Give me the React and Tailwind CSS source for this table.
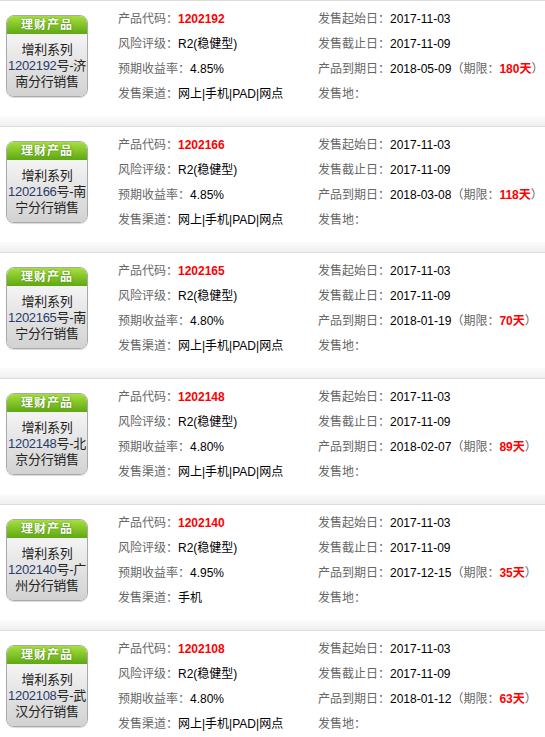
import React from "react";

const products = [
  { code: "1202192", city: "济南", rate: "4.85%", channel: "网上|手机|PAD|网点", end: "2018-05-09", days: "180" },
  { code: "1202166", city: "南宁", rate: "4.85%", channel: "网上|手机|PAD|网点", end: "2018-03-08", days: "118" },
  { code: "1202165", city: "南宁", rate: "4.80%", channel: "网上|手机|PAD|网点", end: "2018-01-19", days: "70" },
  { code: "1202148", city: "北京", rate: "4.80%", channel: "网上|手机|PAD|网点", end: "2018-02-07", days: "89" },
  { code: "1202140", city: "广州", rate: "4.95%", channel: "手机", end: "2017-12-15", days: "35" },
  { code: "1202108", city: "武汉", rate: "4.80%", channel: "网上|手机|PAD|网点", end: "2018-01-12", days: "63" },
];

function Badge({ code, city }) {
  return (
    <div className="w-[82px] h-[82px] rounded-[8px] border border-[#a9a9a9] overflow-hidden flex flex-col shadow-[0_1px_1px_rgba(0,0,0,0.15)]">
      <div className="h-[18px] bg-gradient-to-b from-[#a6e03c] to-[#5ea811] text-white text-[12px] font-bold leading-[18px] text-center tracking-[1px] [text-shadow:0_0_2px_#3d7a05]">
        理财产品
      </div>
      <div className="flex-1 bg-gradient-to-b from-[#f4f4f4] to-[#d2d2d2] text-[#222] text-[13px] leading-[16px] text-center pt-[8px] tracking-[-0.3px]">
        <div>增利系列</div>
        <div>
          <span className="text-[#2a3a6a]">{code}</span>号-{city.slice(0, 1)}
        </div>
        <div>{city.slice(1)}分行销售</div>
      </div>
    </div>
  );
}

function Field({ label, children, width }) {
  return (
    <div className="h-[25px] flex items-center whitespace-nowrap">
      <span className={`text-[#666] ${width}`}>{label}</span>
      <span className="text-black">{children}</span>
    </div>
  );
}

function Row({ p }) {
  return (
    <div className="border-t border-[#dcdcdc]">
      <div className="h-[115px] bg-white flex">
        <div className="w-[112px] pl-[6px] pt-[14px] shrink-0">
          <Badge code={p.code} city={p.city} />
        </div>
        <div className="w-[206px] pl-[6px] pt-[5px] shrink-0">
          <Field label="产品代码：" width="w-[60px]">
            <span className="text-[#ff0000] font-bold">{p.code}</span>
          </Field>
          <Field label="风险评级：" width="w-[60px]">R2(稳健型)</Field>
          <Field label="预期收益率：" width="w-[72px]">{p.rate}</Field>
          <Field label="发售渠道：" width="w-[60px]">{p.channel}</Field>
        </div>
        <div className="pt-[5px]">
          <Field label="发售起始日：" width="w-[72px]">2017-11-03</Field>
          <Field label="发售截止日：" width="w-[72px]">2017-11-09</Field>
          <Field label="产品到期日：" width="w-[72px]">
            {p.end}
            <span className="text-[#666]">（期限：</span>
            <span className="text-[#ff0000] font-bold">{p.days}天</span>
            <span className="text-[#666]">）</span>
          </Field>
          <Field label="发售地：" width="w-[48px]"></Field>
        </div>
      </div>
      <div className="h-[10px] bg-gradient-to-b from-[#fbfbfb] to-[#f0f0f0]"></div>
    </div>
  );
}

export default function App() {
  return (
    <div className="w-[545px] h-[737px] overflow-hidden bg-white text-[12px] font-['Liberation_Sans','Noto_Sans_CJK_SC',sans-serif]">
      {products.map((p) => (
        <Row key={p.code} p={p} />
      ))}
    </div>
  );
}
